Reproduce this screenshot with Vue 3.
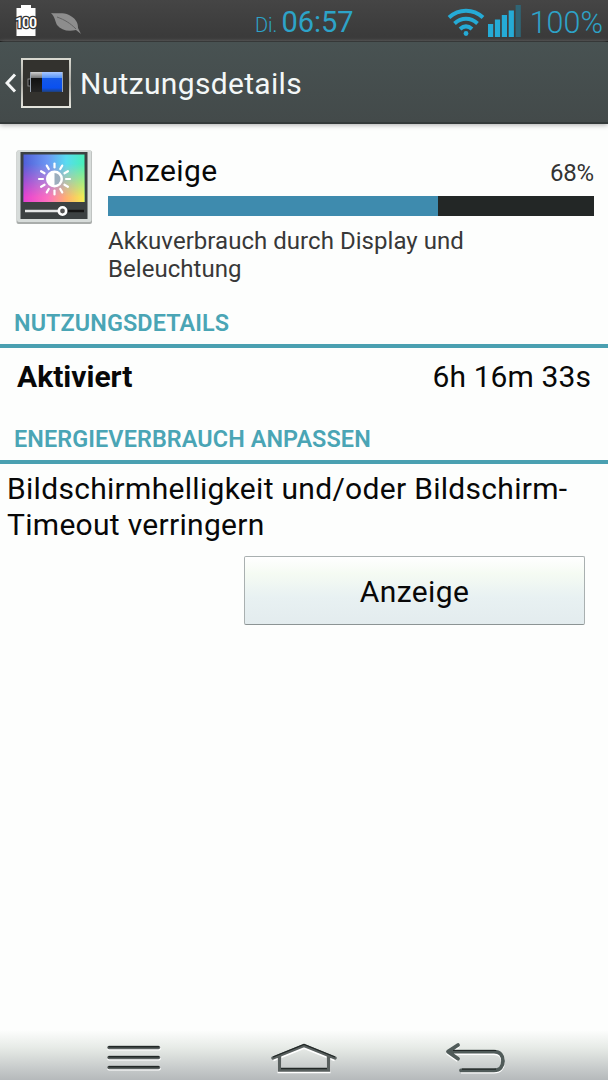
<template>
  <div class="screen">
    <header class="status-bar">
      <div class="status-left">
        <svg class="battery" width="22" height="32" viewBox="0 0 22 32">
          <path d="M1.500 3H6V0h10v3h4.500v28h-19z" fill="#fff" />
          <text x="11" y="22.500" text-anchor="middle" textLength="22" class="battery-text">100</text>
        </svg>
        <svg width="32" height="24" viewBox="0 0 32 24">
          <path
            d="M0 1C6 2 12 0 18 3c6 3 9 7 9 13l3 6-5-4C17 20 10 18 6 13 4 9 4 5 0 1z"
            fill="#8d8d8d"
          />
          <path d="M6 5c8 3 13 6 19 12" stroke="#636363" fill="none" />
        </svg>
      </div>
      <div class="clock"><span class="day">Di.</span><span class="time">06:57</span></div>
      <div class="status-right">
        <svg width="38" height="29" viewBox="0 0 38 29" fill="none" stroke="#25abd6" stroke-width="4">
          <path d="M2 9.500c10-9 24-9 34 0" />
          <path d="M7.500 15.500c7-6.300 16-6.300 23 0" />
          <path d="M13 21c4-3.500 8-3.500 12 0" />
          <circle cx="19" cy="25.500" r="2.400" fill="#25abd6" stroke="none" />
        </svg>
        <svg class="signal" width="33" height="32" viewBox="0 0 33 32">
          <rect
            v-for="(h, i) in bars"
            :key="i"
            :x="i * 6.9"
            :y="32 - h"
            width="5.2"
            :height="h"
            :fill="i < 4 ? '#25abd6' : '#2f6576'"
          />
        </svg>
        <span class="percent">100%</span>
      </div>
    </header>

    <div class="app-bar">
      <svg class="chevron" width="12" height="20" viewBox="0 0 12 20">
        <path d="M10 1.500L2 10l8 8.500" fill="none" stroke="#f4f6f6" stroke-width="3" />
      </svg>
      <svg class="app-icon" width="50" height="50" viewBox="0 0 50 50">
        <defs>
          <linearGradient id="frame" x1="0" y1="0" x2="0" y2="1">
            <stop offset="0" stop-color="#d8d8d0" />
            <stop offset=".5" stop-color="#aaa9a2" />
            <stop offset="1" stop-color="#e4e4dc" />
          </linearGradient>
          <linearGradient id="cellBlue" x1="0" y1="0" x2="0" y2="1">
            <stop offset="0" stop-color="#a9c8ff" />
            <stop offset=".28" stop-color="#5c98f8" />
            <stop offset=".32" stop-color="#1458e8" />
            <stop offset=".8" stop-color="#0a50f0" />
            <stop offset="1" stop-color="#204078" />
          </linearGradient>
          <linearGradient id="cellDark" x1="0" y1="0" x2="0" y2="1">
            <stop offset="0" stop-color="#d0d0d0" />
            <stop offset=".28" stop-color="#77787a" />
            <stop offset=".32" stop-color="#111" />
            <stop offset="1" stop-color="#252525" />
          </linearGradient>
        </defs>
        <rect x="1" y="1" width="48" height="48" fill="#33322e" stroke="url(#frame)" stroke-width="2" />
        <rect x="7" y="21" width="3" height="7" fill="#151515" stroke="#999" stroke-width=".8" />
        <rect x="9" y="14" width="12" height="20" fill="url(#cellDark)" />
        <rect x="21" y="14" width="20" height="20" fill="url(#cellBlue)" />
        <path d="M9.500 14v20M41.500 14v20" stroke="#98a4b4" stroke-width="1" />
      </svg>
      <h1 class="title">Nutzungsdetails</h1>
    </div>

    <main class="content">
      <section class="usage">
        <svg class="display-icon" width="77" height="78" viewBox="0 0 77 78">
          <defs>
            <linearGradient id="topHue">
              <stop offset="0" stop-color="#5060d8" />
              <stop offset=".4" stop-color="#6c98f4" />
              <stop offset=".7" stop-color="#58dcf0" />
              <stop offset="1" stop-color="#48f0b8" />
            </linearGradient>
            <linearGradient id="bottomHue">
              <stop offset="0" stop-color="#e840d0" />
              <stop offset=".4" stop-color="#fc70c0" />
              <stop offset=".7" stop-color="#ffb070" />
              <stop offset="1" stop-color="#f4ee50" />
            </linearGradient>
            <linearGradient id="fade" x1="0" y1="0" x2="0" y2="1">
              <stop offset=".2" stop-color="#000" />
              <stop offset=".9" stop-color="#fff" />
            </linearGradient>
            <mask id="lower"><rect x="7" y="5" width="62" height="48" fill="url(#fade)" /></mask>
          </defs>
          <rect x=".5" y="1.500" width="75.500" height="73.500" rx="2" fill="#a9adab" />
          <rect x="1" y="1" width="74.500" height="72" rx="2" fill="#d7dcda" />
          <rect x="4.500" y="3" width="67" height="67" fill="#3c4142" />
          <rect x="7.500" y="5.500" width="61" height="47.500" fill="url(#topHue)" />
          <rect x="7.500" y="5.500" width="61" height="47.500" fill="url(#bottomHue)" mask="url(#lower)" />
          <g transform="translate(38.500 30)">
            <path
              v-for="n in 12"
              :key="n"
              d="M0-11.500V-15.500"
              :transform="`rotate(${n * 30})`"
              stroke="#fff"
              stroke-width="2.200"
              stroke-linecap="round"
            />
            <circle r="8.500" fill="#fff" />
            <path d="M0-6a6 6 0 0 1 0 12z" fill="#9caebd" />
          </g>
          <path d="M9 62h35" stroke="#e4e6e6" stroke-width="2.500" />
          <path d="M44 62h24" stroke="#151515" stroke-width="2.500" />
          <circle cx="46.500" cy="62" r="3.700" fill="#555" stroke="#fff" stroke-width="2.600" />
        </svg>
        <div class="usage-body">
          <div class="usage-head">
            <span class="name">Anzeige</span>
            <span class="share">{{ usage }}%</span>
          </div>
          <div class="bar">
            <div class="bar-fill" :style="{ width: usage + '%' }"></div>
          </div>
          <p class="description">Akkuverbrauch durch Display und<br />Beleuchtung</p>
        </div>
      </section>

      <h2 class="section-title">Nutzungsdetails</h2>
      <div class="detail-row">
        <span class="label">Aktiviert</span>
        <span class="value">6h 16m 33s</span>
      </div>

      <h2 class="section-title">Energieverbrauch anpassen</h2>
      <p class="hint">Bildschirmhelligkeit und/oder Bildschirm-<br />Timeout verringern</p>
      <button class="action">Anzeige</button>
    </main>

    <nav class="nav-bar">
      <svg width="55" height="32" viewBox="0 0 55 32">
        <g v-for="y in [5.5, 15.5, 25.5]" :key="y" fill="none" stroke-linecap="round">
          <path :d="`M2 ${y + 1.3}h50`" stroke="#fff" stroke-width="3.600" />
          <path :d="`M2 ${y}h49.500`" stroke="#59605f" stroke-width="3.400" />
          <path :d="`M2 ${y - 0.8}h49.500`" stroke="#222827" stroke-width="1.500" />
        </g>
      </svg>
      <svg width="66" height="32" viewBox="0 0 66 32" fill="none">
        <path :d="home" transform="translate(0 1.300)" stroke="#fff" stroke-width="4" />
        <path :d="home" stroke="#59605f" stroke-width="3.400" stroke-linecap="round" />
        <path d="M2 15L33 2.500l31 12.500M10 26.500h46" stroke="#222827" stroke-width="1.300" />
      </svg>
      <svg width="62" height="32" viewBox="0 0 62 32" fill="none" stroke-linejoin="round">
        <path :d="back" transform="translate(0 1.300)" stroke="#fff" stroke-width="4" />
        <path :d="back" stroke="#505b59" stroke-width="3.800" stroke-linecap="round" />
        <path d="M8 8.500h43M17 27.200h34" stroke="#222827" stroke-width="1.200" />
      </svg>
    </nav>
  </div>
</template>

<script setup>
const usage = 68;
const bars = [13, 17.5, 22, 26.5, 32];
const home = "M2 16L33 3.500l31 12.500M8.500 14v14h49V14";
const back = "M13 3L3 9.700l10 7M4 9.700h45c6 0 9 4 9 9.300s-3 9.300-9 9.300H16";
</script>

<style>
body {
  margin: 0;
}
</style>

<style scoped>
.screen {
  display: flex;
  flex-direction: column;
  width: 608px;
  height: 1080px;
  overflow: hidden;
  background-color: #fdfefd;
  color: #080808;
  font-family: Roboto, sans-serif;
}

.status-bar {
  display: grid;
  grid-template-columns: 255px 1fr auto;
  box-sizing: border-box;
  height: 42px;
  border-bottom: 1px solid #080a0a;
  background: linear-gradient(#454545, #393939);
  color: #2da3c8;
}

.status-left {
  display: flex;
  gap: 14px;
  padding: 5px 0 0 15px;
}

.status-left svg + svg {
  margin-top: 7px;
}

.battery {
  overflow: visible;
}

.battery-text {
  font-size: 14px;
  font-weight: bold;
  fill: #fff;
  stroke: #333;
  stroke-width: 2.5px;
  paint-order: stroke;
}

.clock {
  display: flex;
  align-items: baseline;
  gap: 4px;
  line-height: 45px;
}

.day {
  font-size: 20px;
  font-weight: 300;
}

.time {
  font-size: 29px;
}

.status-right {
  display: flex;
  padding-right: 5px;
}

.status-right svg:first-child {
  margin-top: 8px;
}

.signal {
  margin: 5px 0 0 3px;
}

.percent {
  margin-left: 9px;
  font-size: 30.5px;
  font-weight: 300;
  line-height: 45px;
}

.app-bar {
  display: flex;
  align-items: center;
  box-sizing: border-box;
  height: 82px;
  padding-left: 5px;
  border-bottom: 2px solid #343a3a;
  background: linear-gradient(#485252, #434a4a);
  box-shadow: 0 1px 5px #aaa;
}

.chevron {
  margin-top: 2px;
}

.app-icon {
  margin: 2px 0 0 4px;
}

.title {
  margin: 4px 0 0 9px;
  color: #f3f7f7;
  font-size: 30px;
  font-weight: 400;
  letter-spacing: 0.33px;
  line-height: 40px;
}

.content {
  flex: 1;
}

.usage {
  display: flex;
  height: 181px;
  padding: 0 14px 0 16px;
}

.display-icon {
  margin-top: 25px;
}

.usage-body {
  flex: 1;
  margin-left: 15px;
}

.usage-head {
  display: flex;
  align-items: baseline;
  justify-content: space-between;
  height: 72px;
  line-height: 94px;
}

.name {
  font-size: 30px;
  letter-spacing: 0.4px;
}

.share {
  color: #333;
  font-size: 24px;
  letter-spacing: -0.2px;
}

.bar {
  height: 20px;
  background-color: #232726;
}

.bar-fill {
  height: 100%;
  background-color: #3e8bae;
}

.description {
  margin: 12px 0 0;
  color: #383838;
  font-size: 24px;
  letter-spacing: 0.04px;
  line-height: 27.5px;
}

.section-title {
  box-sizing: border-box;
  height: 43px;
  margin: 0;
  padding-left: 14px;
  border-bottom: 4px solid #4aa0b1;
  color: #4aa5b5;
  font-size: 23.4px;
  font-weight: 600;
  letter-spacing: 0.1px;
  line-height: 36px;
  text-transform: uppercase;
}

.detail-row {
  display: flex;
  justify-content: space-between;
  height: 73px;
  padding: 0 17px;
  font-size: 30px;
  line-height: 58px;
}

.label {
  font-weight: 700;
}

.value {
  letter-spacing: 0.1px;
}

.hint {
  margin: 7px 0 0 7px;
  font-size: 30px;
  letter-spacing: 0.3px;
  line-height: 35.5px;
}

.action {
  display: block;
  width: 341px;
  height: 69px;
  margin: 14px 0 0 244px;
  padding: 2px 0 0;
  border: 1px solid #a9b0b0;
  border-bottom-color: #8c9494;
  border-radius: 2px;
  background: linear-gradient(#fff, #f5fbf3 25%, #e8f1f2 60%, #e3ecee);
  color: #080808;
  font-family: inherit;
  font-size: 30px;
  letter-spacing: 0.4px;
}

.nav-bar {
  display: flex;
  box-sizing: border-box;
  height: 50px;
  padding: 12px 0 0 107px;
  background: linear-gradient(#fdfefd, #e7ebe7 35%, #b5b9bb);
}

.nav-bar svg:nth-child(2) {
  margin-left: 109px;
}

.nav-bar svg:nth-child(3) {
  margin-left: 108px;
}
</style>
